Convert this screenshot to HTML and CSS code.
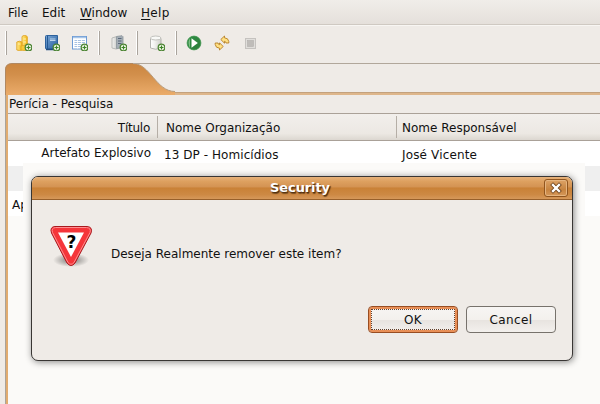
FILE: index.html
```html
<!DOCTYPE html>
<html lang="pt">
<head>
<meta charset="utf-8">
<title>Perícia - Pesquisa</title>
<link rel="stylesheet" href="styles.css">
</head>
<body>
<svg class="defs" width="0" height="0">
  <defs>
    <linearGradient id="gold" x2="1"><stop offset="0" stop-color="#ffe98a"/><stop offset="1" stop-color="#f3b616"/></linearGradient>
    <linearGradient id="gray" x2="1"><stop offset="0" stop-color="#f4f4f2"/><stop offset="1" stop-color="#b4b6b4"/></linearGradient>
    <linearGradient id="pale" x2="1"><stop offset="0" stop-color="#ffffff"/><stop offset=".4" stop-color="#f2f2f0"/><stop offset="1" stop-color="#cfcfcb"/></linearGradient>
    <linearGradient id="blue" x2="1" y2="1"><stop offset="0" stop-color="#7aa6d6"/><stop offset="1" stop-color="#275f9f"/></linearGradient>
    <linearGradient id="green" x2="1" y2="1"><stop offset="0" stop-color="#2f8f45"/><stop offset="1" stop-color="#2b7c3a"/></linearGradient>
    <linearGradient id="tab" x2="0" y2="1"><stop offset="0" stop-color="#cb8640"/><stop offset=".35" stop-color="#d28f4b"/><stop offset="1" stop-color="#ebac6a"/></linearGradient>
    <radialGradient id="shade"><stop offset="0" stop-color="#000" stop-opacity=".5"/><stop offset="1" stop-color="#000" stop-opacity="0"/></radialGradient>
    <g id="plus"><circle cx="12.5" cy="12.5" r="3.3" fill="#edf5e2" stroke="#4c8434" stroke-width="1.3"/><path d="M12.5 10.5v4M10.5 12.5h4" stroke="#3c8428" stroke-width="1.2"/></g>
  </defs>
</svg>
<nav class="menubar">
  <span class="file">File</span><span class="edit">Edit</span><span class="window"><u>W</u>indow</span><span class="help"><u>H</u>elp</span>
</nav>
<div class="toolbar">
  <i class="sep s1"></i>
  <svg class="icon" viewBox="0 0 16 16"><path d="M6 2q0-1.5 2.6-1.5T11.300 2v11H6z" fill="url(#gold)" stroke="#e0a424" stroke-width=".9"/><path d="M.8 7q2.500-1.500 5.200 0v8q-2.600 1-5.200 0z" fill="url(#gold)" stroke="#e0a424" stroke-width=".9"/><path d="M5 11q3-1.500 6 0v4q-3 1-6 0z" fill="#f8ca36" stroke="#e0a424" stroke-width=".8"/><path d="M7.500 4h2.500M2 9h2.500M7.500 7h2.500" stroke="#fff2ae"/><use href="#plus"/></svg>
  <svg class="icon i2" viewBox="0 0 16 16"><path d="M1.500 1.500q0-1 1-1h11v13.500h-11q-1 0-1-1z" fill="url(#blue)" stroke="#2d619c"/><path d="M2 14.500h12" stroke="#234d80" stroke-width="1.500"/><path d="M3.500 1v13" stroke="#245892"/><path d="M6 4h5.500M6 5.500h5.500" stroke="#c9dff2" stroke-width=".9"/><use href="#plus"/></svg>
  <svg class="icon i3" viewBox="0 0 16 16"><rect x=".5" y="1.500" width="14" height="12.500" fill="#fff" stroke="#6d9bd4"/><path d="M1 2.500h13" stroke="#a8c6e8" stroke-width="1.500"/><path d="M2.500 5.500h10.500M2.500 7.500h10.500M2.500 9.500h10.500M2.500 11.500h10.500" stroke="#9dbbe0" stroke-width=".9"/><path d="M5.500 4.500v9M9.500 4.500v9" stroke="#fff" stroke-width=".8"/><use href="#plus"/></svg>
  <i class="sep s2"></i>
  <svg class="icon i4" viewBox="0 0 16 16"><path d="M1 3q4-2.500 8 0v10q-4 2-8 0z" fill="url(#gray)" stroke="#b9bab8"/><path d="M5.500 1.500l5.500-.8 1 1v10.800l-6.500 1z" fill="#a5aeb6" stroke="#8b949b" stroke-width=".8"/><path d="M7 3.500h3.500M7 6h3.500M7 8.500h3.500" stroke="#59677a"/><use href="#plus"/></svg>
  <i class="sep s3"></i>
  <svg class="icon i5" viewBox="0 0 16 16"><path d="M1.500 3.500v9.500q5 2.500 10.500 0V3.500z" fill="url(#pale)" stroke="#b4b4b0"/><ellipse cx="6.750" cy="3" rx="5.250" ry="2" fill="#f9f9f7" stroke="#bcbcb8" stroke-width=".9"/><use href="#plus"/></svg>
  <i class="sep s4"></i>
  <svg class="icon i6" viewBox="0 0 16 16"><circle cx="8" cy="8" r="6.900" fill="url(#green)" stroke="#3e944d" stroke-width=".8"/><path d="M4 3q-3 5 0 10z" fill="#7cbd82"/><path d="M5.500 3.200v9.600L11.800 8z" fill="#fff"/></svg>
  <svg class="icon i7" viewBox="0 0 16 16"><g id="arrow"><path d="M10.500 1L6.800 4.500l3.700 3.700V6.300q1.200 0 1.500 1.700h2.800V6.500q-.5-3.500-4.300-3.700z" fill="#ffe083" stroke="#b57f26" stroke-width=".9" stroke-linejoin="round"/></g><use href="#arrow" transform="rotate(180 8 8)"/></svg>
  <svg class="icon i8" viewBox="0 0 16 16"><rect x="2.500" y="3.500" width="10" height="10" fill="#e0dedb" stroke="#c5c2bf"/><rect x="4.500" y="5.500" width="6" height="6" fill="#bfbcb9" stroke="#b2afac" stroke-width=".6"/></svg>
</div>
<main class="panel">
  <div class="tabs">
    <svg width="595" height="32" viewBox="0 0 595 32">
      <path d="M0 32V7Q0 .5 7 .5H128C145 .5 151 28.500 170 28.500H595V32z" fill="url(#tab)"/>
      <path d="M.5 32V7Q.5 .5 7 .5H128" fill="none" stroke="#b08862"/>
      <path d="M128 .5C145 .5 151 28.500 170 28.500" fill="none" stroke="#b79b7c"/>
      <path d="M128 .5H595" stroke="#b1a79b"/>
      <path d="M170 30.500H595" stroke="#deb68b" stroke-width="3"/>
      <path d="M170 29.500H595" stroke="#c3a17d"/>
      <path d="M170 28.500H595" stroke="#efebe7"/>
    </svg>
  </div>
  <section class="view">
    <div class="caption"><span class="t-caption">Perícia - Pesquisa</span></div>
    <div class="head">
      <div class="c1"><span class="t-titulo">Título</span></div><div class="c2"><span class="t-org">Nome Organização</span></div><div class="c3"><span class="t-resp">Nome Responsável</span></div>
    </div>
    <div class="row">
      <div class="c1"><span class="t-art">Artefato Explosivo</span></div><div class="c2"><span class="t-dp">13 DP - Homicídios</span></div><div class="c3"><span class="t-jose">José Vicente</span></div>
    </div>
    <div class="row alt"></div>
    <div class="row cut"><span>Ap</span></div>
  </section>
</main>
<div class="halo"></div>
<div class="dialog">
  <header class="titlebar"><b>Security</b>
    <button class="close" aria-label="Close"><svg width="12" height="12" viewBox="0 0 12 12"><path d="M3 3l6 6M9 3l-6 6" stroke="#6e4119" stroke-width="4" stroke-linecap="square"/><path d="M3 3l6 6M9 3l-6 6" stroke="#fff" stroke-width="2.400" stroke-linecap="square"/></svg></button>
  </header>
  <div class="content">
    <svg class="warn" width="46" height="46" viewBox="0 0 46 46">
      <ellipse cx="21" cy="37" rx="18" ry="7" fill="url(#shade)"/>
      <path d="M5 3.500H37Q43 4 41 10L25 40Q21 45 17 40L1.500 10Q-.5 4 5 3.500z" fill="#f5353a" stroke="#a8191e"/>
      <path d="M5.500 4.500H36.500Q41.500 5 40 9.500L24 39.500Q21 43 18 39.500L2.500 9.500Q1 5 5.500 4.500z" fill="none" stroke="#ff8d8f"/>
      <path d="M8 9.500H34L21 34z" fill="#fff"/>
      <text x="21.500" y="25" class="q">?</text>
    </svg>
    <p><span class="t-msg">Deseja Realmente remover este item?</span></p>
  </div>
  <div class="actions"><button class="btn ok"><span>OK</span></button><button class="btn"><span class="cancel">Cancel</span></button></div>
</div>
</body>
</html>
```
FILE: styles.css
```css
* { box-sizing: border-box; }
body { margin: 0; width: 600px; height: 404px; overflow: hidden; background: #efebe7; color: #111; font: 12px/16px "DejaVu Sans", sans-serif; }
span { white-space: nowrap; }
.defs { display: block; width: 0; height: 0; }
.menubar { display: flex; height: 25px; padding: 5px 0 0 8px; background: linear-gradient(#f0ede9, #e5e0db); border-bottom: 1px solid #cfc9c2; }
.menubar span { width: 34px; }
.menubar .window { width: 61px; margin-left: 4px; }
.menubar .help { letter-spacing: .3px; }
.menubar u { text-underline-offset: 2px; }
.toolbar { display: flex; height: 38px; padding-top: 6px; border-top: 1px solid #f8f6f3; }
.sep { width: 2px; height: 24px; background: #aaa49d; border-left: 1px solid #fff; margin-top: -1px; }
.s1 { margin-left: 5px; }
.s2 { margin-left: 10px; }
.s3 { margin-left: 9px; }
.s4 { margin-left: 10px; }
.icon { flex: none; width: 16px; height: 16px; margin: 3px 0 0 9px; }
.i2, .i3 { margin-left: 12px; }
.i4 { margin-left: 11px; }
.i5 { margin-left: 11px; }
.i6 { margin-left: 9px; }
.i7 { margin-left: 12px; }
.i8 { margin-left: 13px; }
.panel { margin-left: 5px; height: 341px; }
.tabs { height: 32px; }
.tabs svg { display: block; }
.view { height: 309px; border-left: 1px solid #aaa39a; box-shadow: inset 2px 0 #e1ac70; padding-left: 2px; background: #fbfaf8; background-clip: content-box; }
.caption { height: 19px; padding: 1px 0 0 1px; background: #efebe7; border-bottom: 1px solid #aaa198; }
.head, .row { display: flex; }
.head { height: 27px; background: linear-gradient(#f2efec, #ece8e3 75%, #dcd7d0); border-bottom: 1px solid #aaa198; }
.head > div { padding-top: 6px; }
.c1 { width: 149px; text-align: right; padding-right: 7px; }
.t-titulo { letter-spacing: -.25px; }
.c2 { width: 239px; padding-left: 9px; }
.head .c2, .head .c3 { border: 0 solid; border-left-width: 1px; padding-left: 8px; border-image: linear-gradient(transparent 10%, #b5aea6 10%, #b5aea6 90%, transparent 90%) 1; }
.head .c3 { padding-left: 5px; }
.row { height: 25px; background: #fff; }
.row .c1 { padding-top: 4px; padding-right: 6px; }
.row .c2, .row .c3 { padding-top: 6px; padding-left: 7px; }
.t-dp { letter-spacing: .06px; }
.row .c3 { padding-left: 6px; }
.t-jose { letter-spacing: .15px; }
.row.alt { background: #efefef; }
.row.cut { padding: 6px 0 0 4px; }
.halo { position: absolute; left: 23px; top: 163px; width: 562px; height: 241px; background: #fbfaf8; }
.dialog { position: absolute; left: 31px; top: 176px; width: 542px; height: 185px; border: 1px solid #393634; border-radius: 7px; background: #efebe7; box-shadow: 1px 1px 7px #0007; overflow: hidden; }
.titlebar { position: relative; height: 23px; text-align: center; border-bottom: 1px solid #98602b; background: linear-gradient(#e7b27b 0, #dda05f 20%, #d49353 45%, #c98136 50%, #cd8944 80%, #d6985a); color: #fff; line-height: 22px; text-shadow: 1px 1px 1px #4b2b0d, 1px 2px 1px #4b2b0d99; }
.titlebar b { display: inline-block; font-size: 13px; letter-spacing: -.1px; margin-right: 4px; }
.close { position: absolute; right: 4px; top: 2px; width: 24px; height: 18px; border: 1px solid #90551f; border-radius: 3px; padding: 2px 5px; background: linear-gradient(#dda367, #c78440 60%, #d6985a); box-shadow: inset 0 0 0 1px #e5b47f; }
.close svg { display: block; }
.content { display: flex; height: 106px; padding: 23px 0 0 18px; }
.warn { flex: none; }
.q { font: bold 17px "DejaVu Sans", sans-serif; text-anchor: middle; fill: #000; }
.content p { margin: 23px 0 0 15px; }
.actions { display: flex; justify-content: flex-end; gap: 8px; padding-right: 16px; }
.btn { width: 90px; height: 27px; border: 1px solid #77726c; border-radius: 4px; padding: 0; font: inherit; color: #111; background: linear-gradient(#f7f5f3, #f3f0ed 52%, #e8e4e0 54%, #f3f0ed); }
.cancel { letter-spacing: .4px; }
.ok { position: relative; border-color: #984d22; box-shadow: inset 0 0 0 2px #e88f57; }
.ok span { letter-spacing: .3px; }
.ok::after { content: ""; position: absolute; inset: 2px; border: 1px dotted #63402b; }
```
